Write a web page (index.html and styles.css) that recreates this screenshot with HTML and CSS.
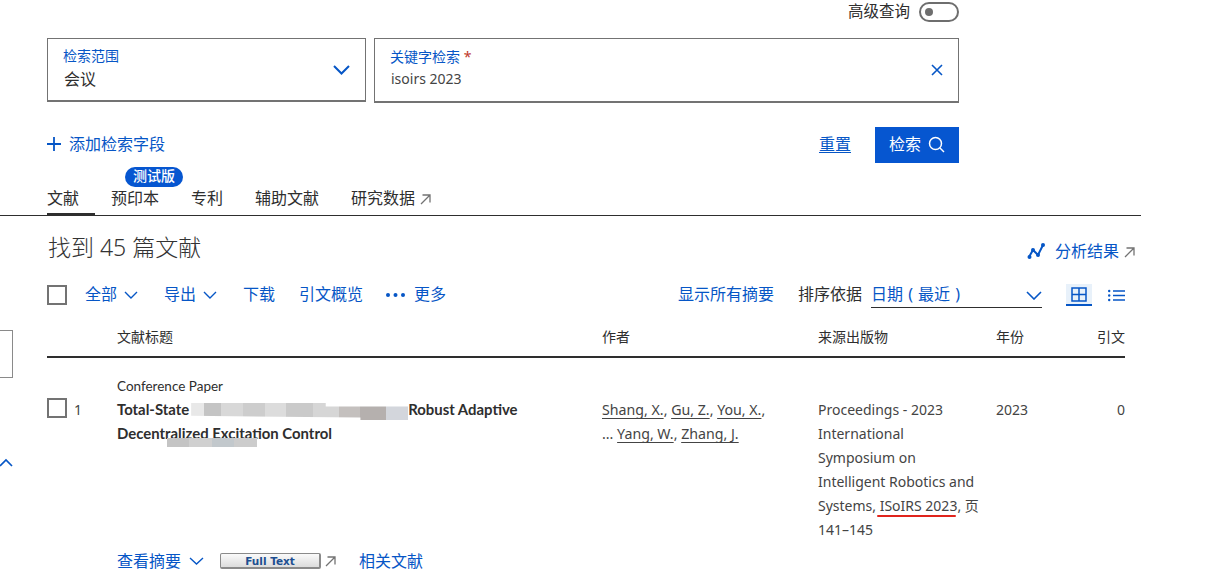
FILE: index.html
```html
<!DOCTYPE html>
<html lang="zh">
<head>
<meta charset="utf-8">
<title>文献检索</title>
<link rel="stylesheet" href="styles.css">
</head>
<body>
<div class="side-box"></div>
<svg class="side-chevron" width="14" height="9" viewBox="0 0 14 9"><path d="M1 8l6-6 6 6" fill="none" stroke="#0656c6" stroke-width="1.7"/></svg>

<section class="search">
  <div class="toggle-row">
    <span class="toggle-label">高级查询</span>
    <span class="toggle"><span class="toggle-dot"></span></span>
  </div>
  <div class="fields">
    <div class="field field-scope">
      <div class="field-text-scope">
        <div class="field-label">检索范围</div>
        <div class="field-value-lg">会议</div>
      </div>
      <svg width="17" height="10" viewBox="0 0 17 10"><path d="M1 1l7.500 7.500L16 1" fill="none" stroke="#0656c6" stroke-width="2"/></svg>
    </div>
    <div class="field field-query">
      <div class="field-text-query">
        <div class="field-label">关键字检索 <span class="req">*</span></div>
        <div class="field-value">isoirs 2023</div>
      </div>
      <svg width="12" height="12" viewBox="0 0 12 12"><path d="M1 1l10 10M11 1L1 11" fill="none" stroke="#0656c6" stroke-width="1.6"/></svg>
    </div>
  </div>
  <div class="actions">
    <a class="link add-field"><svg class="raise" width="14" height="14" viewBox="0 0 14 14"><path d="M7 0v14M0 7h14" fill="none" stroke="#0656c6" stroke-width="1.8"/></svg>添加检索字段</a>
    <div class="actions-right">
      <a class="link reset">重置</a>
      <button class="search-btn">检索<svg width="17" height="17" viewBox="0 0 17 17"><circle cx="7.500" cy="7.500" r="6" fill="none" stroke="#fff" stroke-width="1.500"/><path d="M12 12l4 4" stroke="#fff" stroke-width="1.500"/></svg></button>
    </div>
  </div>
</section>

<nav class="tabs">
  <a class="tab tab-active">文献</a>
  <a class="tab tab-beta">预印本<span class="badge">测试版</span></a>
  <a class="tab">专利</a>
  <a class="tab">辅助文献</a>
  <a class="tab tab-ext">研究数据<svg class="ext" width="11" height="11" viewBox="0 0 11 11"><path d="M1 10l9-9M2.500 1H10v7.500" fill="none" stroke="#737373" stroke-width="1.300"/></svg></a>
</nav>

<main class="results">
  <div class="results-head">
    <h1>找到 45 篇文献</h1>
    <a class="link analyze">
      <svg width="18" height="18" viewBox="0 0 18 18"><path d="M2 15l4-7 5 5 5-10" fill="none" stroke="#0656c6" stroke-width="2"/><circle cx="2.500" cy="15" r="2" fill="#0656c6"/><circle cx="6" cy="8" r="2" fill="#0656c6"/><circle cx="11" cy="13" r="2" fill="#0656c6"/><circle cx="16" cy="3" r="2" fill="#0656c6"/></svg>
      分析结果<svg class="ext" width="11" height="11" viewBox="0 0 11 11"><path d="M1 10l9-9M2.500 1H10v7.500" fill="none" stroke="#737373" stroke-width="1.300"/></svg>
    </a>
  </div>

  <div class="toolbar">
    <div class="tool-left">
      <span class="checkbox"></span>
      <a class="link tool tool-all">全部<svg width="14" height="8" viewBox="0 0 14 8"><path d="M1 1l6 6 6-6" fill="none" stroke="#0656c6" stroke-width="1.400"/></svg></a>
      <a class="link tool">导出<svg width="14" height="8" viewBox="0 0 14 8"><path d="M1 1l6 6 6-6" fill="none" stroke="#0656c6" stroke-width="1.400"/></svg></a>
      <a class="link tool">下载</a>
      <a class="link tool tool-overview">引文概览</a>
      <a class="link tool tool-more"><svg width="19" height="4" viewBox="0 0 19 4"><circle cx="2" cy="2" r="2" fill="#0656c6"/><circle cx="9.500" cy="2" r="2" fill="#0656c6"/><circle cx="17" cy="2" r="2" fill="#0656c6"/></svg>更多</a>
    </div>
    <div class="tool-right">
      <a class="link tool">显示所有摘要</a>
      <span class="sort-label">排序依据</span>
      <div class="sort-select"><span class="sort-value">日期 ( 最近 )</span><svg width="16" height="9" viewBox="0 0 16 9"><path d="M1 1l7 7 7-7" fill="none" stroke="#0656c6" stroke-width="1.600"/></svg></div>
      <span class="view view-active"><svg width="16" height="15" viewBox="0 0 16 15"><path d="M1 1h14v13H1zM8 1v13M1 7.500h14" fill="none" stroke="#0656c6" stroke-width="1.500"/></svg></span>
      <span class="view view-list"><svg width="17" height="13" viewBox="0 0 17 13"><path d="M5 2h12M5 6.500h12M5 11h12" stroke="#0656c6" stroke-width="1.500"/><circle cx="1.200" cy="2" r="1.200" fill="#0656c6"/><circle cx="1.200" cy="6.500" r="1.200" fill="#0656c6"/><circle cx="1.200" cy="11" r="1.200" fill="#0656c6"/></svg></span>
    </div>
  </div>

  <div class="grid table-head">
    <span></span>
    <span>文献标题</span>
    <span>作者</span>
    <span>来源出版物</span>
    <span>年份</span>
    <span class="cell-right">引文</span>
  </div>

  <div class="grid row">
    <div class="cell-check"><span class="checkbox checkbox-row"></span><span class="row-num">1</span></div>
    <div class="cell-title">
      <div class="doc-type">Conference Paper</div>
      <div class="doc-title">Total-State<span class="mosaic mosaic-a"></span>Robust Adaptive<br>Decentralized Excitation Control<span class="mosaic mosaic-b"></span></div>
    </div>
    <div class="cell-authors"><u>Shang, X.</u>, <u>Gu, Z.</u>, <u>You, X.</u>,<br>... <u>Yang, W.</u>, <u>Zhang, J.</u></div>
    <div class="cell-source">Proceedings - 2023 International Symposium on Intelligent Robotics and Systems, <span class="marked">ISoIRS 2023</span>, 页 141–145</div>
    <div class="cell-year">2023</div>
    <div class="cell-cites cell-right">0</div>
  </div>

  <div class="row-links">
    <a class="link abstract">查看摘要<svg width="15" height="8" viewBox="0 0 15 8"><path d="M1 1l6.500 6L14 1" fill="none" stroke="#0656c6" stroke-width="1.400"/></svg></a>
    <a class="fulltext">Full Text</a>
    <svg class="ext" width="11" height="11" viewBox="0 0 11 11"><path d="M1 10l9-9M2.500 1H10v7.500" fill="none" stroke="#737373" stroke-width="1.300"/></svg>
    <a class="link related">相关文献</a>
  </div>
</main>
</body>
</html>
```
FILE: styles.css
```css
* { box-sizing: border-box; }
html, body { margin: 0; height: 583px; overflow: hidden; background: #fff; }
body {
  position: relative;
  font-family: "Noto Sans", "Noto Sans CJK SC", sans-serif;
  font-size: 16px;
  line-height: 24px;
  color: #2e2e2e;
}
.link { color: #0656c6; text-decoration: none; display: inline-flex; align-items: center; }
svg { display: block; flex: none; }

.side-box {
  position: absolute; left: -2px; top: 330px; width: 15px; height: 48px;
  border: 1px solid #8a8a8a; background: #fff;
}
.side-chevron { position: absolute; left: -1px; top: 458px; }

.search { margin-left: 47px; width: 912px; }
.toggle-row { height: 24px; display: flex; justify-content: flex-end; align-items: center; gap: 9px; }
.toggle-label { padding-bottom: 3px; font-size: 15.500px; }
.toggle { width: 40px; height: 20px; border: 2px solid #6e6e6e; border-radius: 10px; display: flex; align-items: center; padding-left: 4px; }
.toggle-dot { width: 8px; height: 8px; border-radius: 50%; background: #6e6e6e; }

.fields { display: flex; gap: 8px; margin-top: 14px; align-items: flex-start; }
.field { border: 1px solid #737373; border-bottom-width: 2px; display: flex; justify-content: space-between; align-items: center; }
.field-scope { width: 319px; height: 64px; padding: 0 15px; }
.field-query { flex: 1; height: 65px; padding: 0 15px; }
.field-text-scope { padding-bottom: 2px; }
.field-text-query { padding-bottom: 4px; }
.field-label { font-size: 14px; line-height: 20px; color: #0656c6; }
.field-value-lg { font-size: 16px; line-height: 24px; margin-top: 1px; margin-left: 1px; }
.field-value { font-size: 14px; line-height: 22px; margin-top: 1px; margin-left: 1px; color: #444; }
.req { color: #c0392b; }

.actions { display: flex; justify-content: space-between; align-items: center; height: 36px; margin-top: 24px; }
.add-field { gap: 8px; padding-bottom: 2px; }
.actions-right { display: flex; align-items: center; gap: 24px; }
.reset { padding-bottom: 2px; text-decoration: underline; text-underline-offset: 2px; }
.search-btn {
  width: 84px; height: 36px; border: 0; padding: 0 0 2px; background: #0656d0; color: #fff;
  font: inherit;
  display: flex; align-items: center; justify-content: center; gap: 7px;
}

.tabs { width: 1141px; height: 53px; padding-left: 47px; border-bottom: 1px solid #2e2e2e; display: flex; align-items: flex-end; gap: 16px; }
.tab { position: relative; padding: 0 16px 3px 0; height: 30px; margin-bottom: -1px; display: flex; align-items: flex-start; border-bottom: 3px solid transparent; }
.tab-active { border-bottom-color: #2e2e2e; }
.badge {
  position: absolute; left: 14px; top: -19px; width: 58px; height: 20px; border-radius: 10px;
  background: #0656d0; color: #fff; font-size: 14px; line-height: 18px; text-align: center; font-weight: 500;
}
.tab-ext { gap: 5px; padding-right: 0; }
.tab-ext .ext { margin-top: 8px; }

.results { margin-left: 47px; width: 1078px; }
.results-head { display: flex; justify-content: space-between; align-items: center; height: 32px; margin-top: 16px; }
h1 { margin: 0 0 0 1px; padding-bottom: 2px; font-size: 23px; font-weight: 300; line-height: 30px; color: #333; }
.analyze { gap: 10px; margin-top: 5px; margin-right: -10px; }
.analyze .ext { margin-left: -5px; margin-top: 3px; }

.toolbar { display: flex; justify-content: space-between; align-items: center; height: 22px; margin-top: 20px; }
.tool-left, .tool-right { display: flex; align-items: center; }
.checkbox { display: block; width: 20px; height: 20px; border: 2px solid #737373; flex: none; }
.tool-left { gap: 26px; }
.tool-all { margin-left: -8px; }
.tool { gap: 7px; padding-bottom: 2px; }
.tool svg { margin-top: 2px; }
.tool-overview { margin-left: -2px; }
.tool-more { gap: 9px; margin-left: -3px; }
.sort-label { margin-left: 24px; padding-bottom: 2px; }
.sort-select { width: 171px; margin-left: 9px; height: 25px; margin-top: 1px; border-bottom: 1px solid #2e2e2e; color: #0656c6; display: flex; justify-content: space-between; align-items: center; }
.sort-value { word-spacing: 1px; padding-bottom: 2px; }
.view { width: 26px; height: 22px; display: flex; align-items: center; justify-content: center; }
.view-active { margin-left: 24px; background: #e8f1fa; border-bottom: 2px solid #0656c6; }
.view-list { margin-left: 16px; width: 17px; }

.grid { display: grid; grid-template-columns: 70px 485px 216px 178px 1fr 64px; }
.table-head { height: 52px; align-items: end; padding-bottom: 9px; border-bottom: 2px solid #2e2e2e; font-size: 14px; line-height: 20px; }
.cell-right { text-align: right; }

.row { font-size: 14px; line-height: 24px; }
.cell-check { display: flex; padding-top: 40px; align-items: flex-start; gap: 7px; }
.row-num { font-size: 14px; color: #444; line-height: 24px; }
.cell-title { padding-top: 18px; }
.doc-type { font-family: "Lato", sans-serif; font-size: 13.500px; line-height: 20px; height: 21px; }
.doc-title { position: relative; width: 420px; font-family: "Lato", "Noto Sans CJK SC", sans-serif; font-size: 14.900px; font-weight: 700; }
.mosaic { display: inline-block; }
.mosaic-a {
  width: 217px; height: 17px; vertical-align: -5px; margin-left: 2px;
  background: linear-gradient(90deg, #e8e8e8 0 6%, #c4c4c4 6% 14%, #d8d8d8 14% 24%, #cdcdcd 24% 34%, #dcdcdc 34% 44%, #cacaca 44% 56%, #d6d6d6 56% 68%, #c4c0be 68% 78%, #b5b0ae 78% 90%, #d3d6dc 90% 100%);
  clip-path: polygon(0 0, 62% 0, 62% 20%, 100% 20%, 100% 100%, 78% 100%, 78% 85%, 0 75%);
  filter: blur(.6px);
}
.mosaic-b {
  position: absolute; left: 50px; top: 41px; width: 90px; height: 9px;
  background: linear-gradient(90deg, #c4c4c4 0 25%, #d0d0d0 25% 50%, #c2c8cc 50% 75%, #cccccc 75% 100%);
  filter: blur(.6px);
}
.cell-authors, .cell-source, .cell-year, .cell-cites { padding-top: 40px; color: #444; }
.cell-authors { font-size: 14.200px; }
.cell-authors u { text-underline-offset: 3px; }
.cell-source { width: 178px; padding-right: 12px; }
.marked { position: relative; }
.marked::after { content: ""; position: absolute; left: -3px; right: 1px; bottom: -2px; height: 2.500px; background: #e0241c; border-radius: 1px; }

.row-links { display: flex; align-items: center; height: 24px; margin-top: 7px; padding-left: 70px; }
.abstract { gap: 8px; }
.fulltext {
  display: block; width: 101px; height: 16px; margin-left: 16px;
  border: 1px solid #8a8a8a; border-bottom-width: 2px; border-right-width: 2px; border-radius: 2px;
  background: linear-gradient(#fafafa, #dcdcdc);
  color: #1d4f91; font: 700 10.500px/14px "DejaVu Sans", sans-serif; text-align: center;
}
.row-links .ext { margin-left: 4px; }
.related { margin-left: 23px; }
```
